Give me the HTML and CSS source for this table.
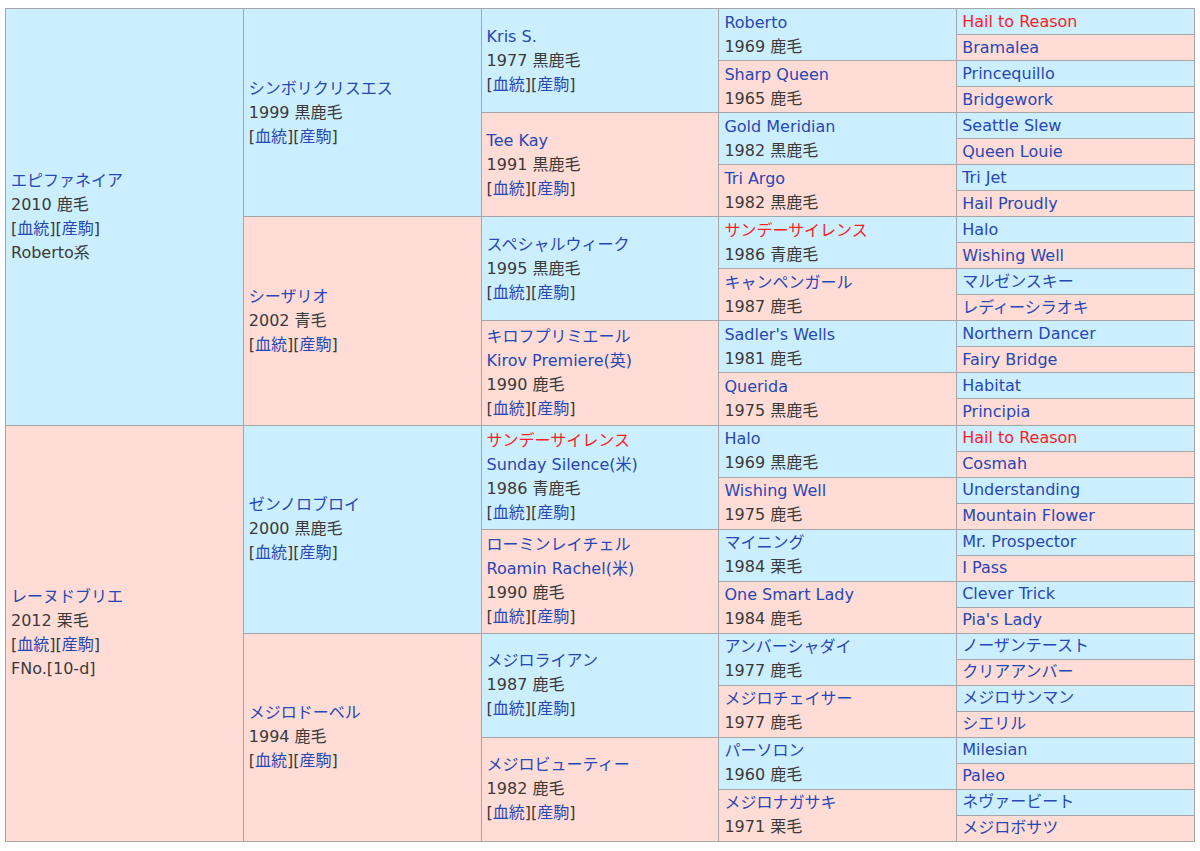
FILE: index.html
```html
<!DOCTYPE html>
<html lang="ja">
<head>
<meta charset="utf-8">
<title>血統表</title>
<link rel="stylesheet" href="styles.css">
</head>
<body>
<table class="ped">
<colgroup><col><col><col><col><col></colgroup>
<tbody>
<tr>
<td rowspan="16" class="m"><a>エピファネイア</a><br>2010 鹿毛<br>[<a>血統</a>][<a>産駒</a>]<br>Roberto系</td>
<td rowspan="8" class="m"><a>シンボリクリスエス</a><br>1999 黒鹿毛<br>[<a>血統</a>][<a>産駒</a>]</td>
<td rowspan="4" class="m"><a>Kris S.</a><br>1977 黒鹿毛<br>[<a>血統</a>][<a>産駒</a>]</td>
<td rowspan="2" class="m"><a>Roberto</a><br>1969 鹿毛</td>
<td class="m g5"><a class="r">Hail to Reason</a></td>
</tr>
<tr><td class="f g5"><a>Bramalea</a></td></tr>
<tr><td rowspan="2" class="f"><a>Sharp Queen</a><br>1965 鹿毛</td><td class="m g5"><a>Princequillo</a></td></tr>
<tr><td class="f g5"><a>Bridgework</a></td></tr>
<tr>
<td rowspan="4" class="f"><a>Tee Kay</a><br>1991 黒鹿毛<br>[<a>血統</a>][<a>産駒</a>]</td>
<td rowspan="2" class="m"><a>Gold Meridian</a><br>1982 黒鹿毛</td>
<td class="m g5"><a>Seattle Slew</a></td>
</tr>
<tr><td class="f g5"><a>Queen Louie</a></td></tr>
<tr><td rowspan="2" class="f"><a>Tri Argo</a><br>1982 黒鹿毛</td><td class="m g5"><a>Tri Jet</a></td></tr>
<tr><td class="f g5"><a>Hail Proudly</a></td></tr>
<tr>
<td rowspan="8" class="f"><a>シーザリオ</a><br>2002 青毛<br>[<a>血統</a>][<a>産駒</a>]</td>
<td rowspan="4" class="m"><a>スペシャルウィーク</a><br>1995 黒鹿毛<br>[<a>血統</a>][<a>産駒</a>]</td>
<td rowspan="2" class="m"><a class="r">サンデーサイレンス</a><br>1986 青鹿毛</td>
<td class="m g5"><a>Halo</a></td>
</tr>
<tr><td class="f g5"><a>Wishing Well</a></td></tr>
<tr><td rowspan="2" class="f"><a>キャンペンガール</a><br>1987 鹿毛</td><td class="m g5"><a>マルゼンスキー</a></td></tr>
<tr><td class="f g5"><a>レディーシラオキ</a></td></tr>
<tr>
<td rowspan="4" class="f"><a>キロフプリミエール</a><br><a>Kirov Premiere(英)</a><br>1990 鹿毛<br>[<a>血統</a>][<a>産駒</a>]</td>
<td rowspan="2" class="m"><a>Sadler's Wells</a><br>1981 鹿毛</td>
<td class="m g5"><a>Northern Dancer</a></td>
</tr>
<tr><td class="f g5"><a>Fairy Bridge</a></td></tr>
<tr><td rowspan="2" class="f"><a>Querida</a><br>1975 黒鹿毛</td><td class="m g5"><a>Habitat</a></td></tr>
<tr><td class="f g5"><a>Principia</a></td></tr>
<tr>
<td rowspan="16" class="f"><a>レーヌドブリエ</a><br>2012 栗毛<br>[<a>血統</a>][<a>産駒</a>]<br>FNo.[10-d]</td>
<td rowspan="8" class="m"><a>ゼンノロブロイ</a><br>2000 黒鹿毛<br>[<a>血統</a>][<a>産駒</a>]</td>
<td rowspan="4" class="m"><a class="r">サンデーサイレンス</a><br><a>Sunday Silence(米)</a><br>1986 青鹿毛<br>[<a>血統</a>][<a>産駒</a>]</td>
<td rowspan="2" class="m"><a>Halo</a><br>1969 黒鹿毛</td>
<td class="m g5"><a class="r">Hail to Reason</a></td>
</tr>
<tr><td class="f g5"><a>Cosmah</a></td></tr>
<tr><td rowspan="2" class="f"><a>Wishing Well</a><br>1975 鹿毛</td><td class="m g5"><a>Understanding</a></td></tr>
<tr><td class="f g5"><a>Mountain Flower</a></td></tr>
<tr>
<td rowspan="4" class="f"><a>ローミンレイチェル</a><br><a>Roamin Rachel(米)</a><br>1990 鹿毛<br>[<a>血統</a>][<a>産駒</a>]</td>
<td rowspan="2" class="m"><a>マイニング</a><br>1984 栗毛</td>
<td class="m g5"><a>Mr. Prospector</a></td>
</tr>
<tr><td class="f g5"><a>I Pass</a></td></tr>
<tr><td rowspan="2" class="f"><a>One Smart Lady</a><br>1984 鹿毛</td><td class="m g5"><a>Clever Trick</a></td></tr>
<tr><td class="f g5"><a>Pia's Lady</a></td></tr>
<tr>
<td rowspan="8" class="f"><a>メジロドーベル</a><br>1994 鹿毛<br>[<a>血統</a>][<a>産駒</a>]</td>
<td rowspan="4" class="m"><a>メジロライアン</a><br>1987 鹿毛<br>[<a>血統</a>][<a>産駒</a>]</td>
<td rowspan="2" class="m"><a>アンバーシャダイ</a><br>1977 鹿毛</td>
<td class="m g5"><a>ノーザンテースト</a></td>
</tr>
<tr><td class="f g5"><a>クリアアンバー</a></td></tr>
<tr><td rowspan="2" class="f"><a>メジロチェイサー</a><br>1977 鹿毛</td><td class="m g5"><a>メジロサンマン</a></td></tr>
<tr><td class="f g5"><a>シエリル</a></td></tr>
<tr>
<td rowspan="4" class="f"><a>メジロビューティー</a><br>1982 鹿毛<br>[<a>血統</a>][<a>産駒</a>]</td>
<td rowspan="2" class="m"><a>パーソロン</a><br>1960 鹿毛</td>
<td class="m g5"><a>Milesian</a></td>
</tr>
<tr><td class="f g5"><a>Paleo</a></td></tr>
<tr><td rowspan="2" class="f"><a>メジロナガサキ</a><br>1971 栗毛</td><td class="m g5"><a>ネヴァービート</a></td></tr>
<tr><td class="f g5"><a>メジロボサツ</a></td></tr>
</tbody>
</table>
</body>
</html>
```
FILE: styles.css
```css
html, body {
  background: #ffffff;
}
body {
  margin: 8px 5px;
  font-family: "DejaVu Sans", "Noto Sans CJK JP", sans-serif;
  font-size: 16px;
  line-height: 24px;
  color: #3a3a3a;
}
.ped {
  width: 1190px;
  height: 834px;
  table-layout: fixed;
  border-collapse: collapse;
}
.ped td {
  border: 1px solid #a6a6a6;
  padding: 0 5px;
  vertical-align: middle;
  white-space: nowrap;
}
.ped td.g5 {
  height: 25px;
  padding-top: 0;
  padding-bottom: 0;
}
.m { background: #ccefff; }
.f { background: #ffdcd6; }
.ped a {
  color: #2747b5;
  text-decoration: none;
}
.ped a.r {
  color: #ff2020;
}
```
